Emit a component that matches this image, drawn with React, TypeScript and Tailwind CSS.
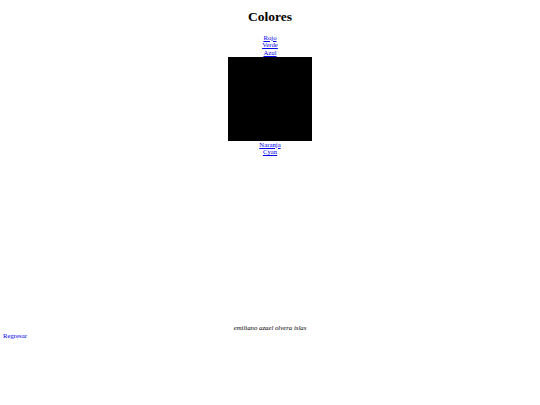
export default function App() {
  return (
    <div className="bg-white text-black text-[6.75px] leading-[7.7px]" style={{ fontFamily: '"Liberation Serif", "Times New Roman", serif' }}>
      <div className="text-center">
        <h1 className="text-[13.5px] leading-[15.5px] font-bold my-[9px]">Colores</h1>
        <div><a href="#" className="text-[#0000ee] underline">Rojo</a></div>
        <div><a href="#" className="text-[#0000ee] underline">Verde</a></div>
        <div><a href="#" className="text-[#0000ee] underline">Azul</a></div>
        <div className="flex justify-center">
          <div className="w-[84px] h-[84px] bg-black" />
        </div>
        <div><a href="#" className="text-[#0000ee] underline">Naranja</a></div>
        <div><a href="#" className="text-[#0000ee] underline">Cyan</a></div>
      </div>
      <div className="mt-[168px] text-center italic">emiliano azael olvera islas</div>
      <div className="pl-[3px]"><a href="#" className="text-[#0000ee] underline">Regresar</a></div>
    </div>
  );
}
